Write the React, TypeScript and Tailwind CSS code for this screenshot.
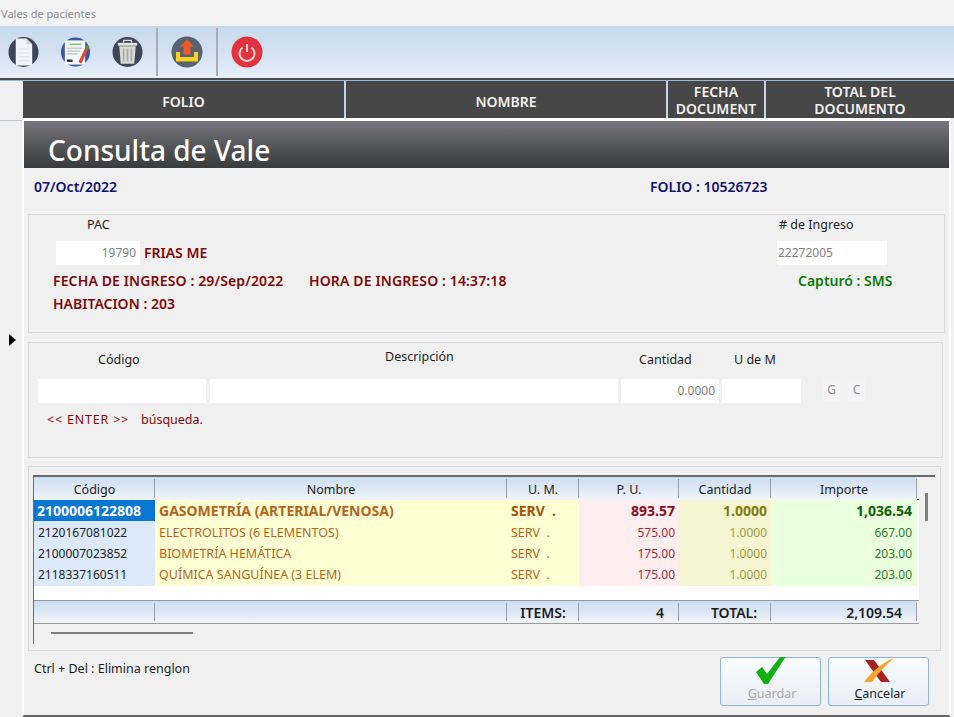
import React from 'react'

const font = { fontFamily: '"Noto Sans", "Open Sans", sans-serif' }

const columns = 'grid w-[885px] grid-cols-[121px_352px_72px_100px_92px_146px]'

const rows = [
  { code: '2100006122808', name: 'GASOMETRÍA (ARTERIAL/VENOSA)', pu: '893.57', qty: '1.0000', total: '1,036.54' },
  { code: '2120167081022', name: 'ELECTROLITOS (6 ELEMENTOS)', pu: '575.00', qty: '1.0000', total: '667.00' },
  { code: '2100007023852', name: 'BIOMETRÍA HEMÁTICA', pu: '175.00', qty: '1.0000', total: '203.00' },
  { code: '2118337160511', name: 'QUÍMICA SANGUÍNEA (3 ELEM)', pu: '175.00', qty: '1.0000', total: '203.00' },
]

const HeadCell = ({ children, right, className = '' }: { children?: React.ReactNode; right?: boolean; className?: string }) => (
  <div className={`relative flex items-center bg-gradient-to-b from-[#cddef2] via-[#dde8f5] to-[#f1f5fa] after:absolute after:right-0 after:top-[2px] after:bottom-[2px] after:w-[1px] after:bg-[#98a1ab] ${right ? 'justify-end pr-[15px]' : 'justify-center'} ${className}`}>
    {children}
  </div>
)

const ToolDoc = () => (
  <svg width="31" height="32" viewBox="0 0 32 32">
    <circle cx="16" cy="16" r="15.5" fill="#3f4658" />
    <path d="M8 2h11l6 6v22H8z" fill="#f2f4fb" />
    <path d="M19 2v6h6z" fill="#cfd5e2" />
    <path d="M11 13h11M11 17h11M11 21h11M11 25h11" stroke="#e0e3ee" strokeWidth="1" />
  </svg>
)

const ToolEdit = () => (
  <svg width="31" height="32" viewBox="0 0 32 32">
    <circle cx="16" cy="16" r="15" fill="#3c55a5" />
    <path d="M5 4h21v25H5z" fill="#f6f7f9" />
    <path d="M10 8h12" stroke="#7cc46a" strokeWidth="1.5" />
    <path d="M7 12h16M7 15h14M7 18h11" stroke="#a4abb5" strokeWidth="1" />
    <path d="M7 25h6" stroke="#30343c" strokeWidth="2.5" />
    <path d="M19 26l7-14 3 1.5L22 28z" fill="#e0492f" />
    <path d="M26 12l1.5-3 3 1.5-1.5 3z" fill="#6a8f3b" />
  </svg>
)

const ToolTrash = () => (
  <svg width="31" height="32" viewBox="0 0 32 32">
    <circle cx="16" cy="16" r="15.5" fill="#3f4658" />
    <path d="M12 6.5V4h8v2.5" fill="none" stroke="#e4e4e2" strokeWidth="1.2" />
    <path d="M6 6.5h20v3H6z" fill="#e4e4e2" />
    <path d="M7.5 10h17l-1.5 18H9z" fill="#d9d9d6" />
    <path d="M12 12.5v13M16 12.5v13M20 12.5v13" stroke="#a9a9a6" strokeWidth="1.6" />
  </svg>
)

const ToolUpload = () => (
  <svg width="32" height="32" viewBox="0 0 32 32">
    <circle cx="16" cy="16" r="15.5" fill="#5a6170" />
    <path d="M16 3.5l7 7h-3.5v8h-7v-8H9z" fill="#ee5a2c" />
    <path d="M5 16h4v5h14v-5h4v9.5H5z" fill="#f6d21f" />
  </svg>
)

const ToolPower = () => (
  <svg width="32" height="32" viewBox="0 0 32 32">
    <circle cx="16" cy="16" r="15.5" fill="#e0333f" />
    <path d="M11.5 11.5a7.5 7.5 0 1 0 9 0" fill="none" stroke="#f6d5d6" strokeWidth="2" />
    <path d="M16 8v8" stroke="#f6d5d6" strokeWidth="2" />
  </svg>
)

const CheckMark = () => (
  <svg width="30" height="28" viewBox="0 0 30 28">
    <path d="M0 15l6-5 5 7L24 0h5.5L12 27H8z" fill="#10b010" />
  </svg>
)

const CrossMark = () => (
  <svg width="30" height="26" viewBox="0 0 30 26">
    <path d="M1 2h9l16 22h-9z" fill="#a9231f" />
    <path d="M0 24C8 14 17 5 30 0 22 7 14 15 8 24z" fill="#f4a52a" />
  </svg>
)

export default function App() {
  return (
    <div className="flex h-[717px] w-[954px] flex-col overflow-hidden bg-[#f0f0f0] text-[13px] text-[#1c1c1c]" style={font}>
      <div className="flex h-[26px] items-center bg-[#f3f3f3] pl-[1px] pt-[2px] text-[11px] text-[#8b8b8b]">Vales de pacientes</div>

      <div className="flex h-[52px] bg-gradient-to-b from-[#c9daee] via-[#d3e1f1] to-[#e6eff9]">
        <div className="flex items-center gap-[21px] pl-[8px] pr-[13px]">
          <ToolDoc />
          <ToolEdit />
          <ToolTrash />
        </div>
        <div className="my-[2px] w-[2px] bg-[#a9adb2]" />
        <div className="flex items-center pl-[13px] pr-[13px]">
          <ToolUpload />
        </div>
        <div className="my-[2px] w-[2px] bg-[#a9adb2]" />
        <div className="flex items-center pl-[13px]">
          <ToolPower />
        </div>
      </div>

      <div className="h-[2px] bg-[#4a4a4c]" />
      <div className="h-[1px] bg-[#9db4d4]" />

      <div className="flex flex-1">
        <div className="flex w-[23px] flex-col">
          <div className="h-[40px] border-b border-[#b4c6e0]" />
          <div className="mt-[213px] flex pl-[9px]">
            <span className="h-0 w-0 border-y-[6px] border-l-[7px] border-y-transparent border-l-black" />
          </div>
        </div>

        <div className="flex min-w-0 flex-1 flex-col">
          <div className="grid h-[37px] grid-cols-[323px_322px_98px_1fr] bg-[#474747] text-center text-[14px] font-semibold leading-[17px] text-[#f2f2f2]">
            <div className="flex items-center justify-center border-r-2 border-[#c4d5ea] pt-[4px]">FOLIO</div>
            <div className="flex items-center justify-center border-r-2 border-[#c4d5ea] pt-[4px]">NOMBRE</div>
            <div className="flex items-center justify-center border-r-2 border-[#c4d5ea] pt-[1px]">FECHA<br />DOCUMENT</div>
            <div className="flex items-center justify-center pt-[1px]">TOTAL DEL<br />DOCUMENTO</div>
          </div>

          <div className="-ml-[1px] mr-[3px] flex-1 border-x-2 border-t-[3px] border-b-2 border-white border-b-[#666]">
            <div className="flex h-[47px] items-center bg-gradient-to-b from-[#75757b] to-[#3a3b3d] pl-[24px] pt-[11px] text-[28px] font-medium leading-none text-white">Consulta de Vale</div>

            <div className="flex h-[46px] pt-[8px] text-[14px] font-semibold text-[#10106e]">
              <span className="ml-[10px] w-[616px]">07/Oct/2022</span>
              <span>FOLIO : 10526723</span>
            </div>

            <div className="ml-[4px] flex h-[119px] w-[917px] flex-col border border-[#d9d9d9] pl-[24px] text-[14px] font-semibold text-[#7c0a0a]">
              <div className="flex pt-[1px]">
                <div className="w-[724px]">
                  <div className="pl-[34px] text-[12.5px] font-normal leading-[18px] text-[#1c1c1c]">PAC</div>
                  <div className="mt-[7px] flex h-[24px] items-center">
                    <div className="ml-[3px] flex h-[24px] w-[84px] items-center justify-end bg-white pr-[4px] text-[12px] font-normal text-[#808080]">19790</div>
                    <span className="ml-[4px] -translate-y-[1px]">FRIAS ME</span>
                  </div>
                </div>
                <div>
                  <div className="pl-[2px] text-[12.5px] font-normal leading-[18px] text-[#1c1c1c]"># de Ingreso</div>
                  <div className="mt-[7px] flex h-[24px] w-[110px] items-center bg-white pl-[1px] text-[12px] font-normal text-[#808080]">22272005</div>
                </div>
              </div>
              <div className="mt-[3px] flex h-[24px] items-center">
                <span className="w-[256px] tracking-[0.13px]">FECHA DE INGRESO : 29/Sep/2022</span>
                <span className="w-[489px] tracking-[0.13px]">HORA DE INGRESO : 14:37:18</span>
                <span className="text-[#0b7a0b]">Capturó : SMS</span>
              </div>
              <div className="flex h-[22px] items-center">HABITACION : 203</div>
            </div>

            <div className="ml-[4px] mt-[9px] flex h-[116px] w-[915px] flex-col border border-[#d9d9d9] pl-[9px]">
              <div className="flex h-[36px] text-[12.5px]">
                <span className="ml-[60px] mt-[8px] w-[287px]">Código</span>
                <span className="mt-[5px] w-[254px]">Descripción</span>
                <span className="mt-[8px] w-[95px]">Cantidad</span>
                <span className="mt-[8px]">U de M</span>
              </div>
              <div className="flex h-[24px] items-stretch gap-[3px] text-[12px] text-[#808080]">
                <div className="mr-[1px] w-[168px] bg-white" />
                <div className="w-[408px] bg-white" />
                <div className="flex w-[98px] items-center justify-end bg-white pr-[4px]">0.0000</div>
                <div className="w-[79px] bg-white" />
                <div className="-mt-[1px] mb-[1px] ml-[19px] flex w-[17px] items-center justify-center rounded-[2px] bg-[#f4f4f4] text-[#8a8a8a]">G</div>
                <div className="-mt-[1px] mb-[1px] ml-[5px] flex w-[17px] items-center justify-center rounded-[2px] bg-[#f4f4f4] text-[#8a8a8a]">C</div>
              </div>
              <div className="mt-[8px] flex text-[12.5px] text-[#7c0a0a]">
                <span className="ml-[9px] w-[94px] whitespace-pre tracking-[0.8px]">{'<< ENTER >>'}</span>
                <span>búsqueda.</span>
              </div>
            </div>

            <div className="ml-[4px] mt-[8px] h-[185px] w-[913px] border border-[#d9d9d9] pl-[4px] pt-[8px]">
              <div className="relative h-[169px] w-[902px] border-l border-t-2 border-[#6a6a6a] bg-[#f0f0f0] text-[12.5px]">
                <div className={`${columns} h-[23px] border-b border-[#333]`}>
                  <HeadCell className="pt-[4px]">Código</HeadCell>
                  <HeadCell className="pt-[4px]">Nombre</HeadCell>
                  <HeadCell className="pt-[4px]">U. M.</HeadCell>
                  <HeadCell className="pt-[4px]">P. U.</HeadCell>
                  <HeadCell className="pt-[4px]">Cantidad</HeadCell>
                  <HeadCell className="pt-[4px]">Importe</HeadCell>
                </div>
                <div className="h-[101px] w-[885px] border-b border-[#9a9a9a] bg-white">
                  {rows.map((r, i) => {
                    const sel = i === 0
                    return (
                      <div key={r.code} className={`${columns} h-[21px] ${sel ? 'text-[14px] font-bold leading-[22px]' : 'leading-[23px]'}`}>
                        <div className={sel ? 'bg-[#0678d4] pl-[3px] text-white' : 'bg-[#dbe9fb] pl-[4px] text-[12px] text-[#222]'}>{r.code}</div>
                        <div className="overflow-hidden whitespace-nowrap bg-[#ffffd4] pl-[4px] text-[#b5651d]">{r.name}</div>
                        <div className={`whitespace-pre bg-[#ffffd4] pl-[4px] ${sel ? 'text-[#a8500c]' : 'text-[#b5651d]'}`}>{'SERV  .'}</div>
                        <div className={`bg-[#ffeef0] pr-[4px] text-right ${sel ? 'text-[#8a0f1e]' : 'text-[12px] text-[#9c2a3c]'}`}>{r.pu}</div>
                        <div className={`bg-[#f5f5d2] pr-[4px] text-right ${sel ? 'text-[#7d7d10]' : 'text-[12px] text-[#9c9c3c]'}`}>{r.qty}</div>
                        <div className={`bg-[#eaffdd] pr-[5px] text-right ${sel ? 'text-[#0d5f0d]' : 'text-[12px] text-[#2c7d2c]'}`}>{r.total}</div>
                      </div>
                    )
                  })}
                </div>
                <div className={`${columns} h-[23px] border-b border-[#9a9a9a] text-[14px] font-semibold`}>
                  <HeadCell />
                  <HeadCell />
                  <HeadCell>ITEMS:</HeadCell>
                  <HeadCell right>4</HeadCell>
                  <HeadCell className="pl-[18px]">TOTAL:</HeadCell>
                  <HeadCell right>2,109.54</HeadCell>
                </div>
                <div className="ml-[17px] mt-[8px] h-[2px] w-[142px] bg-[#7f7f7f]" />
                <div className="absolute left-[891px] top-[16px] h-[28px] w-[3px] bg-[#7f7f7f]" />
              </div>
            </div>

            <div className="flex">
              <span className="ml-[10px] mt-[9px] w-[686px] text-[12.5px]">Ctrl + Del : Elimina renglon</span>
              <button className="relative mt-[6px] flex h-[49px] w-[101px] flex-col items-center justify-end rounded-[3px] border border-[#90b4e0] bg-gradient-to-b from-[#fafbfd] to-[#e8eef7] pb-[1px] pl-[3px] text-[12.5px] text-[#a9a9a9]">
                <span className="absolute -top-[1px] left-[35px]"><CheckMark /></span>
                <span><span className="underline">G</span>uardar</span>
              </button>
              <button className="relative ml-[7px] mt-[6px] flex h-[49px] w-[101px] flex-col items-center justify-end rounded-[3px] border border-[#90b4e0] bg-gradient-to-b from-[#fafbfd] to-[#e8eef7] pb-[1px] pl-[3px] text-[12.5px] text-[#1c1c1c]">
                <span className="absolute top-0 left-[35px]"><CrossMark /></span>
                <span><span className="underline">C</span>ancelar</span>
              </button>
            </div>
          </div>
        </div>
      </div>
    </div>
  )
}
